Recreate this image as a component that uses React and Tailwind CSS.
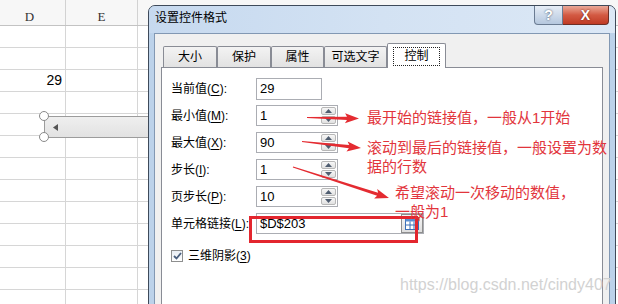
import React from "react";

const CJK = "font-['Liberation_Sans','Noto_Sans_CJK_SC',sans-serif]";

function arrowPoints(x1, y1, x2, y2, headLen = 12, hw = 5, w0 = 0.6, w1 = 1.6) {
  const dx = x2 - x1;
  const dy = y2 - y1;
  const len = Math.hypot(dx, dy);
  const ux = dx / len;
  const uy = dy / len;
  const nx = -uy;
  const ny = ux;
  const bx = x2 - ux * headLen;
  const by = y2 - uy * headLen;
  const pts = [
    [x1 + nx * w0, y1 + ny * w0],
    [bx + nx * w1, by + ny * w1],
    [bx - ux * 2 + nx * hw, by - uy * 2 + ny * hw],
    [x2, y2],
    [bx - ux * 2 - nx * hw, by - uy * 2 - ny * hw],
    [bx - nx * w1, by - ny * w1],
    [x1 - nx * w0, y1 - ny * w0],
  ];
  return pts.map((p) => p.map((v) => v.toFixed(1)).join(",")).join(" ");
}

function Spin() {
  return (
    <div className="flex h-full w-[16px] shrink-0 flex-col gap-[1px] py-[1px] pr-[1px]">
      <div className="flex flex-1 items-center justify-center rounded-[2px] border border-[#b7b7b7] bg-linear-to-b from-[#f7f7f7] to-[#e1e1e1]">
        <svg width="7" height="4" viewBox="0 0 7 4">
          <path d="M0 4 L3.5 0 L7 4Z" fill="#4f5d70" />
        </svg>
      </div>
      <div className="flex flex-1 items-center justify-center rounded-[2px] border border-[#b7b7b7] bg-linear-to-b from-[#f7f7f7] to-[#e1e1e1]">
        <svg width="7" height="4" viewBox="0 0 7 4">
          <path d="M0 0 L3.5 4 L7 0Z" fill="#4f5d70" />
        </svg>
      </div>
    </div>
  );
}

function Label({ pre, u, post }) {
  return (
    <div className={`w-[85px] shrink-0 text-[12px] leading-[16px] text-black ${CJK}`}>
      {pre}(<span className="underline underline-offset-2">{u}</span>){post}
    </div>
  );
}

function SpinRow({ pre, u, value }) {
  return (
    <div className="mb-[6px] flex h-[21px] items-center">
      <Label pre={pre} u={u} post=":" />
      <div className="flex h-[21px] w-[82px] items-stretch border border-[#abadb3] bg-white">
        <div className="flex flex-1 items-center pl-[3px] font-['Liberation_Sans',sans-serif] text-[13px] text-black">
          {value}
        </div>
        <Spin />
      </div>
    </div>
  );
}

export default function App() {
  const rows = Array.from({ length: 13 }, (_, i) => i);
  return (
    <div className="relative h-[304px] w-[618px] overflow-hidden bg-white">
      {/* Spreadsheet */}
      <div className="flex flex-col">
        <div className="flex h-[26px] border-b border-[#c3c3c3] bg-[#f7f7f7]">
          <div className="-ml-[6px] w-[72px] shrink-0 border-r border-[#d2d2d2] pt-[9px] text-center font-['Liberation_Serif',serif] text-[13px] leading-[16px] text-[#333]">
            D
          </div>
          <div className="w-[72px] shrink-0 border-r border-[#d2d2d2] pt-[9px] text-center font-['Liberation_Serif',serif] text-[13px] leading-[16px] text-[#333]">
            E
          </div>
          <div className="flex-1" />
        </div>
        {rows.map((i) => (
          <div key={i} className="flex h-[22px] shrink-0 border-b border-[#d6d6d6]">
            <div className="-ml-[6px] w-[72px] shrink-0 border-r border-[#d6d6d6] pr-[3px] text-right font-['Liberation_Sans',sans-serif] text-[14px] leading-[21px] text-black">
              {i === 2 ? "29" : ""}
            </div>
            <div className="w-[72px] shrink-0 border-r border-[#d6d6d6]" />
            <div className="flex-1" />
          </div>
        ))}
      </div>

      {/* Scroll bar form control on the sheet */}
      <div className="absolute left-[44px] top-[116px] flex h-[22px] w-[120px] items-center border border-[#9c9c9c] bg-linear-to-b from-[#efefef] to-[#e2e2e2] pl-[8px]">
        <svg width="5" height="7" viewBox="0 0 5 7">
          <path d="M5 0 L0 3.5 L5 7Z" fill="#555" />
        </svg>
      </div>
      <div className="absolute left-[39px] top-[111px] h-[10px] w-[10px] rounded-full border-[1.5px] border-[#8a8a8a] bg-white" />
      <div className="absolute left-[39px] top-[132px] h-[10px] w-[10px] rounded-full border-[1.5px] border-[#8a8a8a] bg-white" />

      {/* Dialog window */}
      <div className="absolute left-[148px] top-[5px] flex h-[320px] w-[468px] flex-col overflow-hidden rounded-t-[7px] border border-[#3e4a5a] bg-[#bcd2ea]">
        <div className="flex h-[27px] shrink-0 items-start bg-linear-to-r from-[#c6d9ef] via-[#d3e2f3] to-[#dce8f6] pl-[6px]">
          <div className={`mt-[4px] text-[12px] leading-[16px] text-black ${CJK}`}>设置控件格式</div>
          <div className="ml-auto mr-[6px] flex h-[19px]">
            <div className="flex w-[29px] items-center justify-center rounded-bl-[4px] border border-t-0 border-[#6a7b92] bg-linear-to-b from-[#e6edf6] to-[#b5c7de] font-['Liberation_Sans',sans-serif] text-[14px] font-bold text-white [text-shadow:0_0_2px_#34445a]">
              ?
            </div>
            <div className="flex w-[46px] items-center justify-center rounded-br-[4px] border border-l-0 border-t-0 border-[#6d2e25] bg-linear-to-b from-[#e9a898] via-[#d35a43] to-[#c03a24] font-['Liberation_Sans',sans-serif] text-[14px] font-bold text-white [text-shadow:0_0_2px_#5a1a10]">
              X
            </div>
          </div>
        </div>
        <div className="flex flex-1 px-[5px]">
          <div className="flex flex-1 flex-col border border-[#8298b3] bg-[#f0f0f0] px-[6px] pt-[9px]">
            {/* Tabs */}
            <div className={`flex h-[24px] items-end pl-[2px] text-[12px] text-black ${CJK}`}>
              {[
                ["大小", "w-[54px]"],
                ["保护", "w-[54px]"],
                ["属性", "w-[53px]"],
                ["可选文字", "w-[63px]"],
              ].map(([t, w]) => (
                <div
                  key={t}
                  className={`${w} flex h-[21px] items-center justify-center rounded-t-[2px] border border-b-0 border-[#898c95] bg-linear-to-b from-[#f3f3f3] to-[#e2e2e2] leading-[16px]`}
                >
                  {t}
                </div>
              ))}
              <div className="relative z-10 -mb-[1px] flex h-[25px] w-[59px] items-center justify-center rounded-t-[2px] border border-b-0 border-[#898c95] bg-white">
                <div className="flex h-[19px] w-[47px] items-center justify-center border border-dotted border-[#222] leading-[16px]">
                  控制
                </div>
              </div>
            </div>
            {/* Panel */}
            <div className="flex flex-1 flex-col border border-[#898c95] bg-white pl-[9px] pt-[10px]">
              <div className="mb-[6px] flex h-[21px] items-center">
                <Label pre="当前值" u="C" post=":" />
                <div className="flex h-[22px] w-[66px] items-center border border-[#abadb3] bg-white pl-[3px] font-['Liberation_Sans',sans-serif] text-[13px] text-black">
                  29
                </div>
              </div>
              <SpinRow pre="最小值" u="M" value="1" />
              <SpinRow pre="最大值" u="X" value="90" />
              <SpinRow pre="步长" u="I" value="1" />
              <SpinRow pre="页步长" u="P" value="10" />
              <div className="mb-[15px] flex h-[21px] items-center">
                <Label pre="单元格链接" u="L" post=":" />
                <div className="flex h-[21px] w-[168px] items-stretch border border-[#abadb3] bg-white">
                  <div className="flex flex-1 items-center pl-[3px] font-['Liberation_Sans',sans-serif] text-[13px] text-black">
                    $D$203
                  </div>
                  <div className="flex w-[22px] items-center justify-center border border-[#8e8e8e] bg-linear-to-b from-[#f7f7f7] to-[#dedede]">
                    <svg width="15" height="13" viewBox="0 0 15 13">
                      <rect x="0.5" y="1.5" width="13" height="11" fill="#fff" stroke="#3b6fb6" />
                      <rect x="0.5" y="1.5" width="13" height="3" fill="#5b8ed0" />
                      <path d="M0.5 8 H13.5 M5 4.5 V12.5 M9 4.5 V12.5" stroke="#3b6fb6" />
                      <path d="M10 0 L14.5 0 L14.5 4.5Z" fill="#c0392b" />
                    </svg>
                  </div>
                </div>
              </div>
              <div className="flex h-[13px] items-center">
                <div className="flex h-[12px] w-[12px] items-center justify-center border border-[#8e8f8f] bg-linear-to-b from-[#e9eef4] to-[#ffffff]">
                  <svg width="9" height="8" viewBox="0 0 9 8">
                    <path d="M1 4 L3.5 6.5 L8 1" fill="none" stroke="#4a5f7e" strokeWidth="1.8" />
                  </svg>
                </div>
                <div className={`ml-[5px] text-[12px] leading-[16px] text-black ${CJK}`}>
                  三维阴影(<span className="underline underline-offset-2">3</span>)
                </div>
              </div>
            </div>
          </div>
        </div>
      </div>

      {/* Watermark */}
      <div className="pointer-events-none absolute left-[400px] top-[274px] font-['Liberation_Sans',sans-serif] text-[16px] leading-[22px] text-[#d2d2d2]">
        https://blog.csdn.net/cindy407
      </div>

      {/* Red annotation box */}
      <div className="pointer-events-none absolute left-[249px] top-[216px] h-[27px] w-[169px] border-[3px] border-[#e3262e]" />

      {/* Annotation arrows */}
      <svg className="pointer-events-none absolute left-0 top-0" width="618" height="304" viewBox="0 0 618 304">
        <polygon points={arrowPoints(307, 117.5, 359, 118.5)} fill="#e42b31" />
        <polygon points={arrowPoints(302, 141.5, 361, 148)} fill="#e42b31" />
        <polygon points={arrowPoints(293, 167, 389, 198)} fill="#e42b31" />
      </svg>

      {/* Annotation texts */}
      <div className={`pointer-events-none absolute left-[367px] top-[108px] whitespace-nowrap text-[15px] leading-[19px] text-[#e2353c] ${CJK}`}>
        最开始的链接值，一般从1开始
      </div>
      <div className={`pointer-events-none absolute left-[367px] top-[138px] whitespace-nowrap text-[15px] leading-[19px] text-[#e2353c] ${CJK}`}>
        滚动到最后的链接值，一般设置为数
        <br />
        据的行数
      </div>
      <div className={`pointer-events-none absolute left-[395px] top-[183px] whitespace-nowrap text-[15px] leading-[19px] text-[#e2353c] ${CJK}`}>
        希望滚动一次移动的数值，
        <br />
        一般为1
      </div>
    </div>
  );
}
